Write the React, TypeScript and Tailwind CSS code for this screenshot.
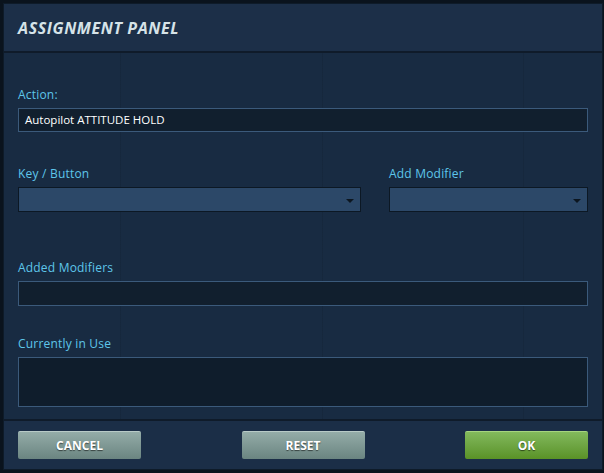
import React from "react";

const font = { fontFamily: '"Open Sans", "DejaVu Sans", sans-serif' };

function Label({ children }: { children: React.ReactNode }) {
  return (
    <div className="text-[12px] leading-[14px] text-[#5ec6ea] mb-[6px] tracking-[0.2px]" style={font}>
      {children}
    </div>
  );
}

function Select() {
  return (
    <div className="relative h-[25px] bg-[#2c4868] border border-[#0c1824]">
      <div className="absolute right-[6px] top-[11px] w-0 h-0 border-l-[4px] border-r-[4px] border-t-[4px] border-l-transparent border-r-transparent border-t-[#0c1620]" />
    </div>
  );
}

function Btn({ children, green }: { children: React.ReactNode; green?: boolean }) {
  return (
    <div
      className={
        "w-[123px] h-[28px] flex items-center justify-center rounded-[2px] text-[12px] font-bold text-white border-t " +
        (green
          ? "bg-gradient-to-b from-[#82b95c] to-[#5a9226] border-[#a6d47f]"
          : "bg-gradient-to-b from-[#94aca8] to-[#6b8581] border-[#b8cac7]")
      }
      style={{ ...font, textShadow: "0 1px 1px rgba(0,0,0,0.55)" }}
    >
      {children}
    </div>
  );
}

export default function App() {
  return (
    <div className="w-[604px] h-[473px] bg-[#0a131d] pt-[3px] pl-[3px] pr-[1px] pb-[3px]">
      <div className="w-full h-full flex flex-col border border-[#0e1b29] bg-[#182b42]">
        <div className="h-[49px] bg-[#1c2f48] flex items-center pl-[14px] pt-[1px] border-b-2 border-[#0f1b2a]">
          <div
            className="text-[16px] font-bold italic text-[#d6e3e8] tracking-[0.6px]"
            style={font}
          >
            ASSIGNMENT PANEL
          </div>
        </div>
        <div
          className="flex-1 px-[14px] pt-[35px] bg-[#182b42]"
          style={{
            backgroundImage:
              "linear-gradient(90deg, transparent 116px, rgba(10,20,32,0.15) 116px, rgba(10,20,32,0.15) 117px, transparent 117px, transparent 318px, rgba(10,20,32,0.15) 318px, rgba(10,20,32,0.15) 319px, transparent 319px, transparent 519px, rgba(10,20,32,0.15) 519px, rgba(10,20,32,0.15) 520px, transparent 520px)",
          }}
        >
          <Label>Action:</Label>
          <div
            className="h-[24px] bg-[#111f2e] border border-[#3b5a7b] flex items-center pl-[6px] text-[11.5px] text-white"
            style={font}
          >
            Autopilot ATTITUDE HOLD
          </div>
          <div className="flex gap-[28px] mt-[35px]">
            <div className="w-[343px]">
              <Label>Key / Button</Label>
              <Select />
            </div>
            <div className="flex-1">
              <Label>Add Modifier</Label>
              <Select />
            </div>
          </div>
          <div className="mt-[49px]">
            <Label>Added Modifiers</Label>
            <div className="h-[25px] bg-[#111f2e] border border-[#3b5a7b]" />
          </div>
          <div className="mt-[31px]">
            <Label>Currently in Use</Label>
            <div className="h-[50px] bg-[#0f1d2c] border border-[#3b5a7b]" />
          </div>
        </div>
        <div className="h-[50px] bg-[#1b2e47] border-t-2 border-[#0f1b2a] flex items-center justify-between px-[14px]">
          <Btn>CANCEL</Btn>
          <Btn>RESET</Btn>
          <Btn green>OK</Btn>
        </div>
      </div>
    </div>
  );
}
